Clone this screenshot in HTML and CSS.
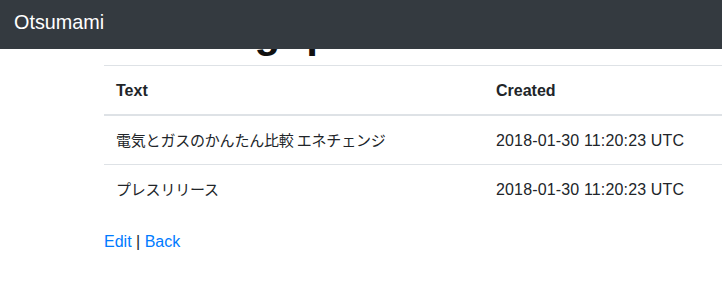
FILE: index.html
```html
<!DOCTYPE html>
<html lang="ja">
<head>
<meta charset="utf-8">
<title>Otsumami</title>
<link rel="stylesheet" href="styles.css">
</head>
<body>
<nav class="navbar">
  <a class="brand" href="#">Otsumami</a>
</nav>
<main class="container">
  <h1 class="title">Showing post</h1>
  <table class="table">
    <thead>
      <tr>
        <th class="col-text">Text</th>
        <th>Created</th>
      </tr>
    </thead>
    <tbody>
      <tr>
        <td><span class="ja">電気とガスのかんたん比較 エネチェンジ</span></td>
        <td class="date">2018-01-30 11:20:23 UTC</td>
      </tr>
      <tr>
        <td><span class="ja">プレスリリース</span></td>
        <td class="date">2018-01-30 11:20:23 UTC</td>
      </tr>
    </tbody>
  </table>
  <p class="actions"><a href="#">Edit</a> | <a href="#">Back</a></p>
</main>
</body>
</html>
```
FILE: styles.css
```css
html, body {
  margin: 0;
  padding: 0;
  overflow: hidden;
}
body {
  font-family: "Liberation Sans", Arial, "Noto Sans CJK JP", sans-serif;
  font-size: 16px;
  line-height: 24px;
  color: #212529;
  background: #fff;
}
.navbar {
  position: fixed;
  top: 0;
  left: 0;
  right: 0;
  height: 49px;
  background: #343a40;
  z-index: 10;
  box-sizing: border-box;
  padding: 7px 0 0 14px;
}
.brand {
  display: block;
  color: #fff;
  text-decoration: none;
  font-size: 19.8px;
  line-height: 30px;
}
.container {
  padding: 9px 0 0 104px;
}
.title {
  margin: 0 0 8px 0;
  font-size: 42px;
  line-height: 48px;
  font-weight: bold;
  color: #111;
  word-spacing: 14px;
  white-space: nowrap;
  letter-spacing: 0.2px;
}
.table {
  width: 618px;
  border-collapse: collapse;
  margin-bottom: 16px;
}
.table th,
.table td {
  padding: 13px 12px 11px 12px;
  height: 24px;
  text-align: left;
  vertical-align: top;
  border-top: 1px solid #dee2e6;
  white-space: nowrap;
}
.table th {
  font-weight: bold;
}
.table thead th {
  border-bottom: 2px solid #dee2e6;
}
.col-text {
  width: 356px;
}
.ja {
  font-family: "Noto Sans CJK JP", sans-serif;
  font-size: 15px;
  line-height: 16px;
  letter-spacing: -0.2px;
  vertical-align: 0;
}
.date {
  letter-spacing: 0.15px;
}
.actions {
  margin: 0;
  padding-top: 1px;
}
.actions a {
  color: #007bff;
  text-decoration: none;
}
```
